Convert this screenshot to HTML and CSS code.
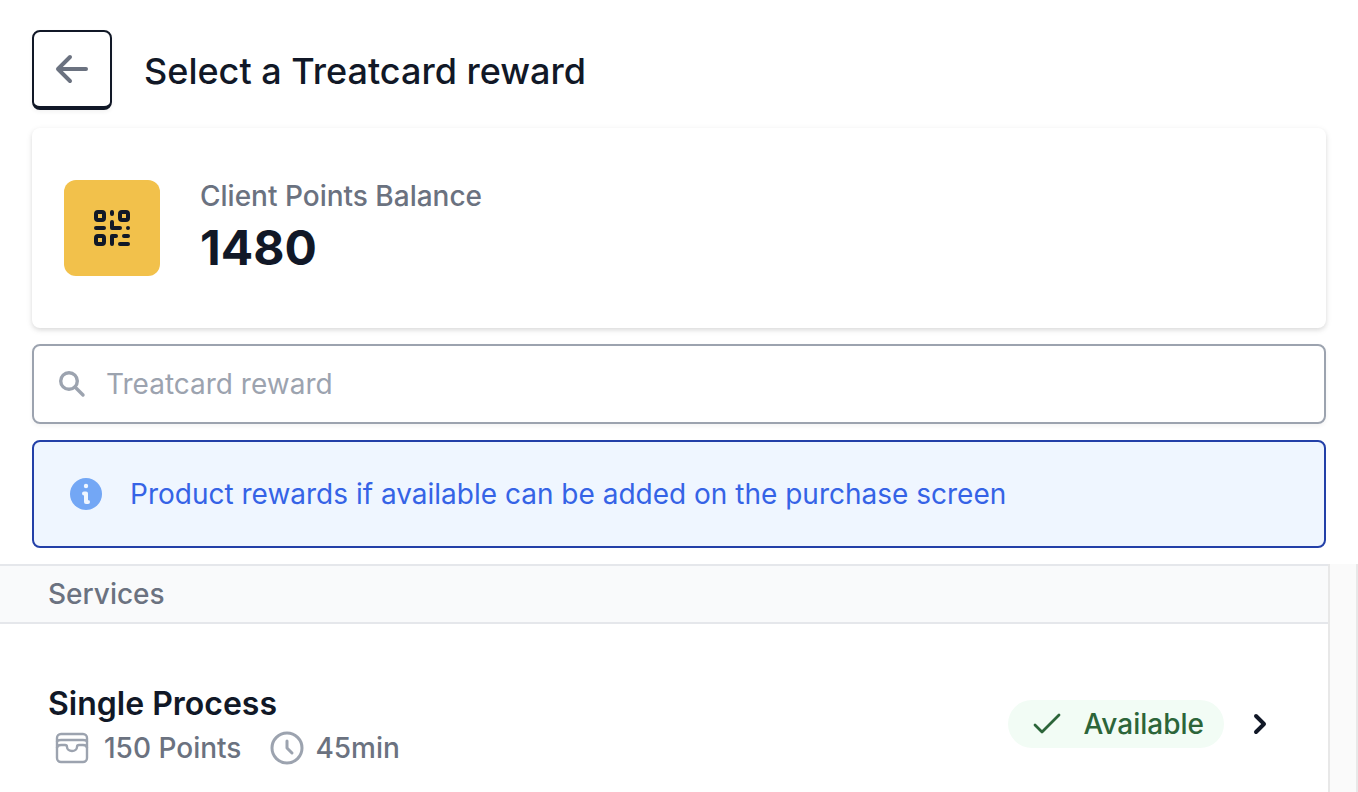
FILE: index.html
```html
<!DOCTYPE html>
<html lang="en">
<head>
<meta charset="utf-8">
<meta name="viewport" content="width=device-width, initial-scale=1">
<title>Select a Treatcard reward</title>
<link rel="stylesheet" href="styles.css">
</head>
<body>
<div class="top">
  <header class="header">
    <button class="back" type="button" aria-label="Back">
      <svg width="40" height="40" viewBox="0 0 20 20" fill="currentColor"><path fill-rule="evenodd" d="M9.707 16.707a1 1 0 01-1.414 0l-6-6a1 1 0 010-1.414l6-6a1 1 0 011.414 1.414L5.414 9H17a1 1 0 110 2H5.414l4.293 4.293a1 1 0 010 1.414z"/></svg>
    </button>
    <h1 class="title">Select a Treatcard reward</h1>
  </header>
  <section class="balance">
    <div class="balance-icon">
      <svg width="36" height="36" viewBox="0 0 36 36" fill="none" stroke="currentColor" stroke-width="4" stroke-linecap="round" stroke-linejoin="round"><rect x="2" y="2" width="8" height="8" rx="2"/><rect x="26" y="2" width="8" height="8" rx="2"/><rect x="2" y="26" width="8" height="8" rx="2"/><path d="M18 2v2M18 12v6h8M2 18h8M34 18h0M18 34v-8h4M30 26h4M26 34h8"/></svg>
    </div>
    <dl class="balance-text">
      <dt class="balance-label">Client Points Balance</dt>
      <dd class="balance-value">1480</dd>
    </dl>
  </section>
  <label class="search">
    <svg width="32" height="32" viewBox="0 0 32 32" fill="none" stroke="currentColor" stroke-width="3.400" stroke-linecap="round"><circle cx="13" cy="13" r="8.300"/><path d="M19 19l8 8"/></svg>
    <input class="search-input" type="text" placeholder="Treatcard reward" aria-label="Treatcard reward">
  </label>
  <div class="notice" role="note">
    <svg width="32" height="32" viewBox="0 0 32 32"><circle cx="16" cy="16" r="16" fill="#73a7f5"/><circle cx="16" cy="8" r="2.200" fill="#eff6ff"/><path d="M14 15.500h2v8.500h2" fill="none" stroke="#eff6ff" stroke-width="4" stroke-linecap="round" stroke-linejoin="round"/></svg>
    <p class="notice-text">Product rewards if available can be added on the purchase screen</p>
  </div>
</div>
<main class="list">
  <div class="list-body">
    <h2 class="group">Services</h2>
    <a class="item" href="#single-process">
      <div class="item-info">
        <h3 class="item-name">Single Process</h3>
        <div class="meta">
          <svg width="36" height="36" viewBox="0 0 36 36" fill="none" stroke="currentColor" stroke-width="2.400"><rect x="3" y="4" width="30" height="28" rx="4"/><path d="M3 12q0-2 4-2h22q4 0 4 2M3 18q0-3 4-3h4q2 0 2 2a5 4 0 0010 0q0-2 2-2h4q4 0 4 3"/></svg>
          <span class="points">150 Points</span>
          <svg width="36" height="36" viewBox="0 0 36 36" fill="none" stroke="currentColor" stroke-width="3" stroke-linecap="round" stroke-linejoin="round"><circle cx="18" cy="18" r="15"/><path d="M18 11v7l5 5"/></svg>
          <span class="duration">45min</span>
        </div>
      </div>
      <span class="badge">
        <svg width="28" height="24" viewBox="0 0 28 24" fill="none" stroke="currentColor" stroke-width="2.800" stroke-linecap="round" stroke-linejoin="round"><path d="M2 13l7 7L26 3"/></svg>
        Available
      </span>
      <svg class="chevron" width="40" height="40" viewBox="0 0 20 20" fill="currentColor"><path fill-rule="evenodd" d="M7.293 14.707a1 1 0 010-1.414L10.586 10 7.293 6.707a1 1 0 011.414-1.414l4 4a1 1 0 010 1.414l-4 4a1 1 0 01-1.414 0z"/></svg>
    </a>
  </div>
  <div class="gutter"></div>
</main>
</body>
</html>
```
FILE: styles.css
```css
* { box-sizing: border-box; margin: 0; }

body {
  min-height: 100vh;
  display: flex;
  flex-direction: column;
  background: #fff;
  color: #111827;
  font: 500 28px/40px Inter, sans-serif;
}

svg { display: block; flex: none; }

.top {
  display: flex;
  flex-direction: column;
  gap: 16px;
  padding: 30px 32px 16px;
}

.header { display: flex; align-items: center; gap: 32px; }

.back {
  display: flex;
  align-items: center;
  justify-content: center;
  width: 80px;
  height: 80px;
  margin-bottom: 2px;
  padding: 0;
  border: 2px solid #111827;
  border-bottom-width: 4px;
  border-radius: 8px;
  background: #fff;
  color: #6b7280;
  box-shadow: 0 2px 4px rgba(0, 0, 0, 0.05);
}

.title { font-size: 36px; font-weight: 500; line-height: 56px; }

.balance {
  display: flex;
  align-items: center;
  gap: 40px;
  min-height: 200px;
  padding: 32px;
  border-radius: 8px;
  background: #fff;
  box-shadow: 0 2px 6px rgba(0, 0, 0, 0.1), 0 2px 4px rgba(0, 0, 0, 0.06);
}

.balance-icon {
  display: flex;
  align-items: center;
  justify-content: center;
  width: 96px;
  height: 96px;
  border-radius: 12px;
  background: #f2c14b;
}

.balance-label { color: #6b7280; line-height: 40px; }
.balance-value { font-size: 48px; font-weight: 700; line-height: 64px; }

.search {
  display: flex;
  align-items: center;
  gap: 18px;
  height: 80px;
  padding: 0 22px;
  border: 2px solid #9ca3af;
  border-radius: 8px;
  color: #9ca3af;
  box-shadow: 0 2px 4px rgba(0, 0, 0, 0.05);
}

.search-input {
  flex: 1;
  min-width: 0;
  padding: 0;
  border: 0;
  outline: 0;
  background: none;
  color: #111827;
  font: 400 28px/40px Inter, sans-serif;
}

.search-input::placeholder { color: #9ca3af; opacity: 1; }

.notice {
  display: flex;
  align-items: center;
  gap: 28px;
  padding: 32px 36px;
  border: 2px solid #2340a8;
  border-radius: 8px;
  background: #eff6ff;
  color: #3563e6;
}

.notice-text { font-weight: 400; }

.list { flex: 1; display: flex; }
.list-body { flex: 1; min-width: 0; }

.group {
  padding: 8px 48px;
  border: solid #e5e7eb;
  border-width: 2px 0;
  background: #f9fafb;
  color: #6b7280;
  font-size: 28px;
  font-weight: 500;
}

.item {
  display: flex;
  align-items: center;
  padding: 56px 48px 24px;
  color: #111827;
  text-decoration: none;
}

.item-info { flex: 1; }
.item-name { font-size: 32px; font-weight: 600; line-height: 48px; }
.meta { display: flex; align-items: center; padding-left: 6px; color: #9ca3af; }
.points, .duration { color: #6b7280; }
.points { margin: 0 28px 0 14px; }
.duration { margin-left: 10px; }

.badge {
  display: flex;
  align-items: center;
  gap: 22px;
  height: 48px;
  padding: 0 20px 0 25px;
  border-radius: 24px;
  background: #f2fcf5;
  color: #2c6539;
}

.chevron { margin-left: 16px; }

.gutter {
  width: 30px;
  border: solid #e8e8e8;
  border-width: 0 2px;
  background: #fafafa;
}
```
